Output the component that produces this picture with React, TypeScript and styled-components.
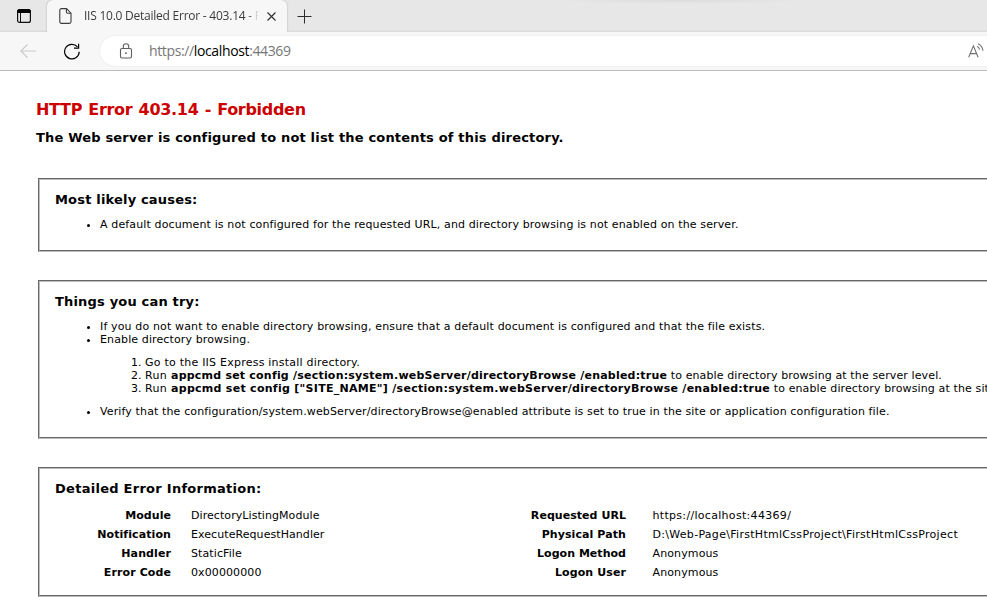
import React from "react";
import styled, { createGlobalStyle } from "styled-components";

const GlobalStyle = createGlobalStyle`
  *, *::before, *::after { box-sizing: border-box; }
  html, body { margin: 0; padding: 0; background: #fff; overflow: hidden; }
`;

const Window = styled.div`
  display: flex;
  flex-direction: column;
  width: 987px;
  height: 605px;
  overflow: hidden;
  background: #fff;
  color: #000;
`;

const TabStrip = styled.div`
  display: flex;
  flex: none;
  height: 32px;
  background:
    radial-gradient(ellipse 130px 4px at 680px 0, rgba(0, 0, 0, 0.05), transparent),
    linear-gradient(#e7e7e7 30px, #dfdfdf 31px, #d6d6d6 32px);
`;

const TabActions = styled.div`
  display: flex;
  align-items: center;
  width: 47px;
  padding-left: 16px;
`;

const Tab = styled.div`
  display: flex;
  align-items: center;
  width: 240px;
  height: 32px;
  padding-left: 12px;
  background: #f7f7f7;
  border-radius: 6px 6px 0 0;
  box-shadow: 0 0 2px rgba(0, 0, 0, 0.28);
  clip-path: inset(-2px -3px 0 -3px);
`;

const TabTitle = styled.span`
  width: 175px;
  margin-left: 12px;
  overflow: hidden;
  white-space: pre;
  font: 12px/16px "Open Sans", sans-serif;
  letter-spacing: -0.24px;
  color: #3b3b3b;
  mask-image: linear-gradient(90deg, #000 163px, transparent 175px);
`;

const CloseButton = styled.span`
  display: flex;
  margin-left: 8px;
`;

const NewTabButton = styled.span`
  display: flex;
  align-items: center;
  margin-left: 10px;
`;

const Toolbar = styled.div`
  display: flex;
  align-items: center;
  flex: none;
  height: 39px;
  border-bottom: 1px solid #bcbcbc;
  background: #f7f7f7;
`;

const BackButton = styled.span`
  display: flex;
  width: 43px;
  margin-left: 20px;
`;

const RefreshButton = styled.span`
  display: flex;
  width: 37px;
`;

const AddressBar = styled.div`
  display: flex;
  align-items: center;
  flex: 1;
  height: 30px;
  padding: 0 3px 0 19px;
  background: #fff;
  border-radius: 15px 0 0 15px;
  box-shadow: 0 0 2px rgba(0, 0, 0, 0.1);
`;

const Url = styled.span`
  flex: 1;
  margin-left: 16px;
  font: 14px/20px "Open Sans", sans-serif;
  letter-spacing: -0.37px;
  color: #767676;
`;

const Host = styled.span`
  color: #000;
`;

const Page = styled.main`
  display: flex;
  flex-direction: column;
  width: 1100px;
  padding: 28px 0 0 36px;
  font: 11px/13px "DejaVu Sans", Verdana, sans-serif;
`;

const Title = styled.h1`
  margin: 0;
  font-size: 16px;
  line-height: 22px;
  letter-spacing: -0.3px;
  word-spacing: 0.9px;
  color: #c00;
`;

const Subtitle = styled.h2<{ $track: number }>`
  margin: 9px 0 32px;
  font-size: 13px;
  line-height: 16px;
  letter-spacing: ${(p) => p.$track}px;
`;

const Panel = styled.section<{ $bottom?: number }>`
  margin: 0 0 28px 2px;
  padding: 12px 15px ${(p) => p.$bottom ?? 19}px;
  border: 2px groove #bcbcbc;
`;

const PanelTitle = styled.h3<{ $track: number }>`
  margin: 0;
  font-size: 13px;
  line-height: 16px;
  letter-spacing: ${(p) => p.$track}px;
`;

const Item = styled.li`
  white-space: nowrap;
`;

const Bullets = styled.ul`
  margin: 10px 0 0;
  padding-left: 45px;
`;

const Steps = styled.ol`
  margin: 10px 0;
  padding-left: 45px;
`;

const Text = styled.span<{ $track: number }>`
  letter-spacing: ${(p) => p.$track}px;
`;

const Command = styled.b<{ $track: number }>`
  letter-spacing: ${(p) => p.$track}px;
`;

const Details = styled.dl`
  display: grid;
  grid-template-columns: 116px 340px 115px auto;
  grid-auto-rows: 19px;
  line-height: 19px;
  margin: 9px 0 0;
`;

const Label = styled.dt<{ $track: number }>`
  text-align: right;
  font-weight: bold;
  letter-spacing: ${(p) => p.$track}px;
`;

const Value = styled.dd<{ $track: number; $gap?: number }>`
  margin: 0 0 0 ${(p) => p.$gap ?? 20}px;
  white-space: nowrap;
  letter-spacing: ${(p) => p.$track}px;
`;

const TabActionsIcon = () => (
  <svg width="16" height="16" viewBox="0 0 16 16" fill="none">
    <rect x="1.6" y="1.6" width="12.8" height="12.8" rx="2" stroke="#111" strokeWidth="1.2" />
    <path d="M1.2 5V3.2a2 2 0 0 1 2-2h9.6a2 2 0 0 1 2 2V5z" fill="#000" />
    <path d="M4.5 5v9" stroke="#111" />
  </svg>
);

const DocumentIcon = () => (
  <svg width="13" height="16" viewBox="0 0 13 16" fill="none" stroke="#3c3c3c" strokeWidth="1.1">
    <path d="M2.3.6h5.2L12 5.2v8.6a1.6 1.6 0 0 1-1.6 1.6H2.3A1.5 1.5 0 0 1 .8 13.9V2.1A1.5 1.5 0 0 1 2.3.6z" />
    <path d="M7.4.8v3.3c0 .8.4 1.2 1.2 1.2h3.2" />
  </svg>
);

const CloseIcon = () => (
  <svg width="9" height="9" viewBox="0 0 9 9" stroke="#2e2e2e" strokeWidth="1.1">
    <path d="M.5.5l8 8M8.5.5l-8 8" />
  </svg>
);

const PlusIcon = () => (
  <svg width="15" height="15" viewBox="0 0 15 15" stroke="#2b2b2b" strokeWidth="1">
    <path d="M7.5.5v14M.5 7.5h14" />
  </svg>
);

const BackIcon = () => (
  <svg width="17" height="14" viewBox="0 0 17 14" fill="none" stroke="#c9c9c9" strokeWidth="1.1">
    <path d="M7.4.5L.8 7l6.6 6.5M1 7h15" />
  </svg>
);

const RefreshIcon = () => (
  <svg width="18" height="17" viewBox="0 0 18 17" fill="none" stroke="#000" strokeWidth="1.2">
    <path d="M16.2 8.7A7.3 7.3 0 1 1 14.5 3.9" />
    <path d="M15.6.8v4.4H11" />
  </svg>
);

const LockIcon = () => (
  <svg width="14" height="16" viewBox="0 0 14 16" fill="none" stroke="#5f5f5f" strokeWidth="1.1">
    <rect x="1.5" y="5.5" width="11" height="9.5" rx="1.5" />
    <path d="M4.3 5.5V3.4a2.7 2.7 0 0 1 5.4 0v2.1" />
    <circle cx="7" cy="10.2" r="0.9" fill="#5f5f5f" stroke="none" />
  </svg>
);

const ReadAloudIcon = () => (
  <svg width="16" height="16" viewBox="0 0 16 16" fill="none" stroke="#707070" strokeWidth="1.1">
    <path d="M.7 14.3L5.4 2.9l4.7 11.4M2.3 10.6h6.2" />
    <path d="M9.2 3.2c1.5.8 2.2 2 2.3 3.6M10 .8c2.9 1.3 4.6 3.6 4.9 7" />
  </svg>
);

export default function App() {
  return (
    <>
      <GlobalStyle />
      <Window>
        <TabStrip>
          <TabActions>
            <TabActionsIcon />
          </TabActions>
          <Tab>
            <DocumentIcon />
            <TabTitle>IIS 10.0 Detailed Error - 403.14 - Forbidden</TabTitle>
            <CloseButton>
              <CloseIcon />
            </CloseButton>
          </Tab>
          <NewTabButton>
            <PlusIcon />
          </NewTabButton>
        </TabStrip>
        <Toolbar>
          <BackButton>
            <BackIcon />
          </BackButton>
          <RefreshButton>
            <RefreshIcon />
          </RefreshButton>
          <AddressBar>
            <LockIcon />
            <Url>
              https://<Host>localhost</Host>:44369
            </Url>
            <ReadAloudIcon />
          </AddressBar>
        </Toolbar>
        <Page>
          <Title>HTTP Error 403.14 - Forbidden</Title>
          <Subtitle $track={0.18}>
            The Web server is configured to not list the contents of this directory.
          </Subtitle>
          <Panel>
            <PanelTitle $track={0.18}>Most likely causes:</PanelTitle>
            <Bullets>
              <Item>
                <Text $track={0.13}>
                  A default document is not configured for the requested URL, and directory browsing is not enabled on
                  the server.
                </Text>
              </Item>
            </Bullets>
          </Panel>
          <Panel>
            <PanelTitle $track={0.18}>Things you can try:</PanelTitle>
            <Bullets>
              <Item>
                <Text $track={0.142}>
                  If you do not want to enable directory browsing, ensure that a default document is configured and that
                  the file exists.
                </Text>
              </Item>
              <Item>
                <Text $track={0.12}>Enable directory browsing.</Text>
                <Steps>
                  <Item>
                    <Text $track={0.23}>Go to the IIS Express install directory.</Text>
                  </Item>
                  <Item>
                    <Text $track={0.353}>Run </Text>
                    <Command $track={0.215}>
                      appcmd set config /section:system.webServer/directoryBrowse /enabled:true
                    </Command>
                    <Text $track={0.12}> to enable directory browsing at the server level.</Text>
                  </Item>
                  <Item>
                    <Text $track={0.353}>Run </Text>
                    <Command $track={0.283}>
                      appcmd set config ["SITE_NAME"] /section:system.webServer/directoryBrowse /enabled:true
                    </Command>
                    <Text $track={0.125}> to enable directory browsing at the site level.</Text>
                  </Item>
                </Steps>
              </Item>
              <Item>
                <Text $track={0.128}>
                  Verify that the configuration/system.webServer/directoryBrowse@enabled attribute is set to true in the
                  site or application configuration file.
                </Text>
              </Item>
            </Bullets>
          </Panel>
          <Panel $bottom={13}>
            <PanelTitle $track={0.27}>Detailed Error Information:</PanelTitle>
            <Details>
              <Label $track={0.05}>Module</Label>
              <Value $track={0.07}>DirectoryListingModule</Value>
              <Label $track={0.05}>Requested URL</Label>
              <Value $track={0.31} $gap={26.5}>https://localhost:44369/</Value>
              <Label $track={0.09}>Notification</Label>
              <Value $track={0.07}>ExecuteRequestHandler</Value>
              <Label $track={0.09}>Physical Path</Label>
              <Value $track={0.295} $gap={26.5}>{"D:\\Web-Page\\FirstHtmlCssProject\\FirstHtmlCssProject"}</Value>
              <Label $track={0.1}>Handler</Label>
              <Value $track={0.1}>StaticFile</Value>
              <Label $track={0.03}>Logon Method</Label>
              <Value $track={0.12} $gap={26.5}>Anonymous</Value>
              <Label $track={0.1}>Error Code</Label>
              <Value $track={0.1}>0x00000000</Value>
              <Label $track={0.1}>Logon User</Label>
              <Value $track={0.12} $gap={26.5}>Anonymous</Value>
            </Details>
          </Panel>
        </Page>
      </Window>
    </>
  );
}
